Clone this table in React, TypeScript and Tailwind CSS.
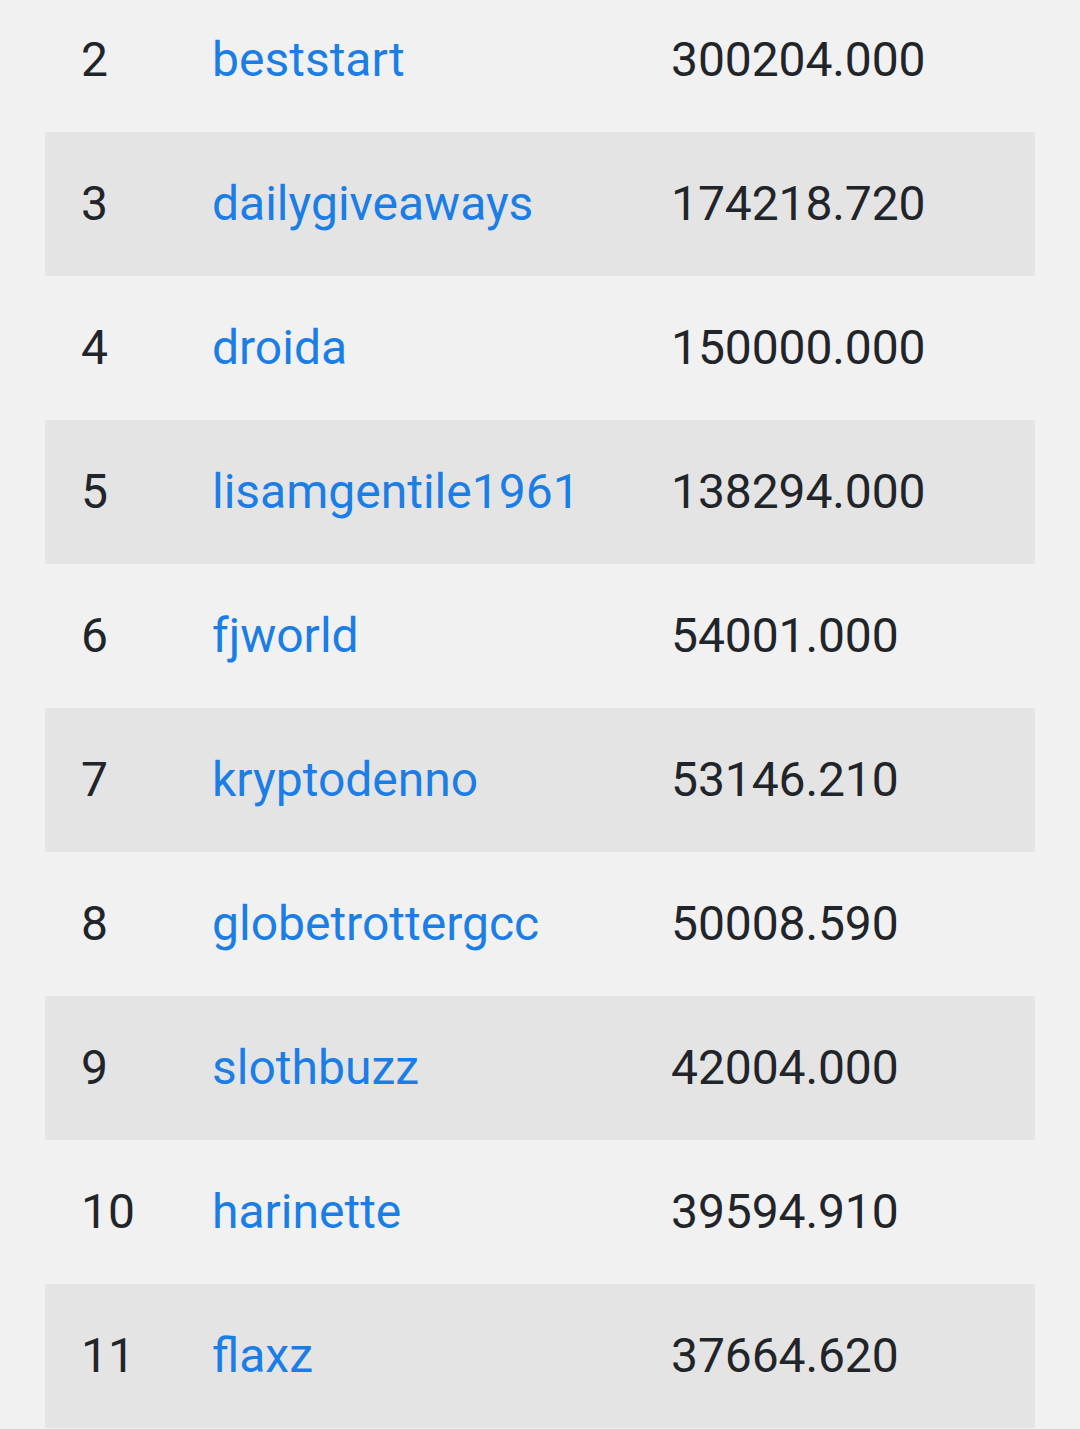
const rows = [
  { rank: 2, name: "beststart", amount: "300204.000" },
  { rank: 3, name: "dailygiveaways", amount: "174218.720" },
  { rank: 4, name: "droida", amount: "150000.000" },
  { rank: 5, name: "lisamgentile1961", amount: "138294.000" },
  { rank: 6, name: "fjworld", amount: "54001.000" },
  { rank: 7, name: "kryptodenno", amount: "53146.210" },
  { rank: 8, name: "globetrottergcc", amount: "50008.590" },
  { rank: 9, name: "slothbuzz", amount: "42004.000" },
  { rank: 10, name: "harinette", amount: "39594.910" },
  { rank: 11, name: "flaxz", amount: "37664.620" },
];

export default function App() {
  return (
    <div className="min-h-[1429px] overflow-hidden bg-[#f1f1f1] px-[45px] font-['Roboto',sans-serif] text-[48px] leading-none">
      <div className="-mt-[12px] flex flex-col">
        {rows.map((r, i) => (
          <div
            key={r.rank}
            className={`grid h-[144px] grid-cols-[132px_458px_1fr] items-center ${
              i % 2 === 1 ? "bg-[#e4e4e4]" : ""
            }`}
          >
            <div className="pl-[36px] text-[#212529]">{r.rank}</div>
            <div className="pl-[35px]">
              <a href="#" className="text-[#1a7ee6]">
                {r.name}
              </a>
            </div>
            <div className="pl-[36px] tracking-[-0.1px] text-[#212529]">{r.amount}</div>
          </div>
        ))}
      </div>
    </div>
  );
}
